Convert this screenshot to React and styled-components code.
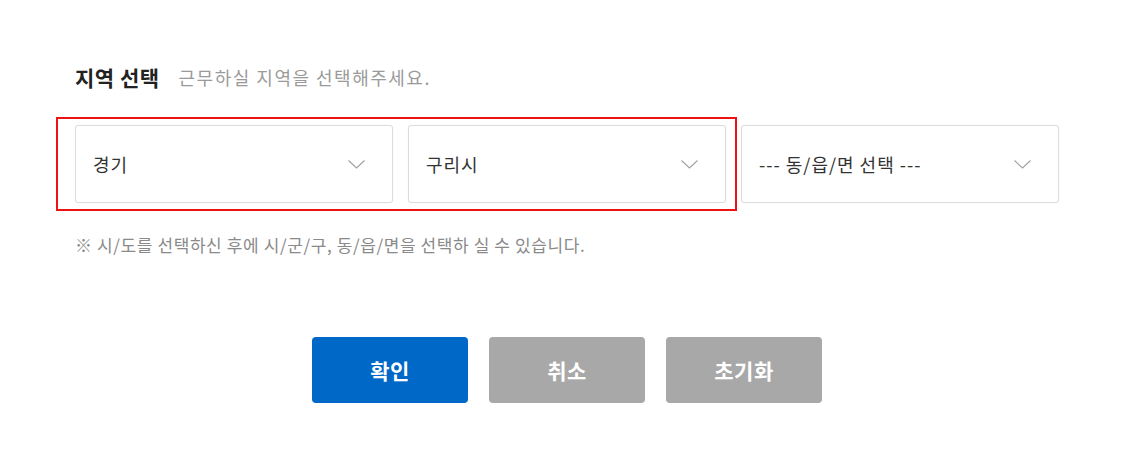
import React from "react";
import styled, { createGlobalStyle } from "styled-components";

const regions = [
  { id: "sido", label: "경기" },
  { id: "sigungu", label: "구리시" },
  { id: "dong", label: "--- 동/읍/면 선택 ---" },
];

const buttons = [
  { id: "ok", label: "확인", primary: true },
  { id: "cancel", label: "취소" },
  { id: "reset", label: "초기화" },
];

const Chevron = () => (
  <svg width="17" height="9" viewBox="0 0 17 9" fill="none">
    <path d="M0.5 0.5L8.5 8L16.5 0.5" stroke="#a0a0a0" strokeWidth="1.1" />
  </svg>
);

const App = () => {
  return (
    <>
      <GlobalStyle />
      <Page>
        <Content>
          <Header>
            <Title>지역 선택</Title>
            <Subtitle>근무하실 지역을 선택해주세요.</Subtitle>
          </Header>
          <SelectRow>
            <Highlight />
            {regions.map((r) => (
              <Select key={r.id}>
                <SelectText>{r.label}</SelectText>
                <Chevron />
              </Select>
            ))}
          </SelectRow>
          <Note>※ 시/도를 선택하신 후에 시/군/구, 동/읍/면을 선택하 실 수 있습니다.</Note>
        </Content>
        <ButtonRow>
          {buttons.map((b) => (
            <Button key={b.id} $primary={b.primary}>
              {b.label}
            </Button>
          ))}
        </ButtonRow>
      </Page>
    </>
  );
};

export default App;

const GlobalStyle = createGlobalStyle`
  body {
    margin: 0;
    background: #fff;
    font-family: "Noto Sans CJK KR", "Noto Sans", sans-serif;
  }
`;

const Page = styled.div`
  width: 1134px;
  height: 475px;
  padding-top: 60px;
  box-sizing: border-box;
`;

const Content = styled.div`
  padding-left: 75px;
`;

const Header = styled.div`
  display: flex;
  align-items: center;
  height: 34px;
  margin-bottom: 31px;
`;

const Title = styled.h2`
  margin: 0;
  font-size: 21px;
  font-weight: 700;
  color: #222;
  letter-spacing: 0.5px;
`;

const Subtitle = styled.span`
  margin-left: 19px;
  font-size: 18px;
  color: #9a9a9a;
  letter-spacing: 1.5px;
`;

const SelectRow = styled.div`
  position: relative;
  display: flex;
  gap: 15px;
`;

const Highlight = styled.div`
  position: absolute;
  left: -19px;
  top: -8px;
  width: 681px;
  height: 94px;
  border: 2px solid #ee1111;
  box-sizing: border-box;
  pointer-events: none;
`;

const Select = styled.div`
  width: 318px;
  height: 78px;
  box-sizing: border-box;
  border: 1px solid #dcdcdc;
  border-radius: 3px;
  box-shadow: 0 0 1px rgba(0, 0, 0, 0.08);
  display: flex;
  align-items: center;
  justify-content: space-between;
  padding: 0 27px 0 17px;
  background: #fff;
`;

const SelectText = styled.span`
  font-size: 18px;
  color: #333;
  letter-spacing: 1px;
`;

const Note = styled.p`
  margin: 32px 0 0;
  font-size: 17px;
  line-height: 20px;
  color: #8a8a8a;
  letter-spacing: 0.6px;
`;

const ButtonRow = styled.div`
  display: flex;
  justify-content: center;
  gap: 21px;
  margin-top: 82px;
`;

const Button = styled.button`
  width: 156px;
  height: 66px;
  border: none;
  border-radius: 4px;
  background: ${(p) => (p.$primary ? "#0068c6" : "#a8a8a8")};
  color: #fff;
  font-family: "Noto Sans CJK KR", "Noto Sans", sans-serif;
  font-size: 21px;
  font-weight: 700;
  letter-spacing: 0.5px;
  cursor: pointer;
`;
